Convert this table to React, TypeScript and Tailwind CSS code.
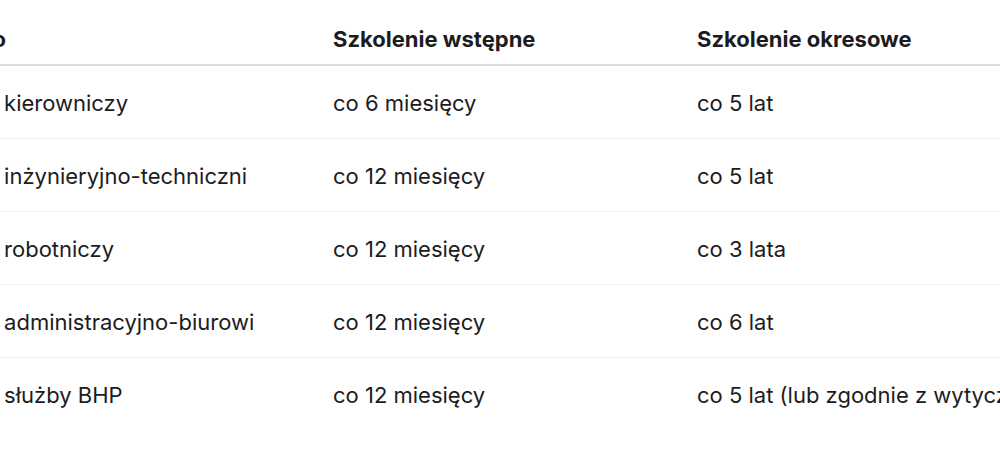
const rows = [
  { group: 'Pracownicy kierowniczy', initial: 'co 6 miesięcy', periodic: 'co 5 lat' },
  { group: 'Pracownicy inżynieryjno-techniczni', initial: 'co 12 miesięcy', periodic: 'co 5 lat' },
  { group: 'Pracownicy robotniczy', initial: 'co 12 miesięcy', periodic: 'co 3 lata' },
  { group: 'Pracownicy administracyjno-biurowi', initial: 'co 12 miesięcy', periodic: 'co 6 lat' },
  { group: 'Pracownicy służby BHP', initial: 'co 12 miesięcy', periodic: 'co 5 lat (lub zgodnie z wytycznymi)' },
];

export default function App() {
  return (
    <div
      className="w-[1000px] h-[469px] overflow-hidden bg-white text-[#1c1c1e]"
      style={{ fontFamily: 'Inter, "Noto Sans", sans-serif' }}
    >
      <table className="ml-[-123px] w-[1320px] table-fixed border-collapse text-left text-[22px] whitespace-nowrap">
        <colgroup>
          <col className="w-[456px]" />
          <col className="w-[364px]" />
          <col className="w-[500px]" />
        </colgroup>
        <thead>
          <tr className="h-[65px] border-b-2 border-[#dcdcdc]">
            <th className="p-0 pt-[15px] pl-[4px] font-bold">Stanowisko</th>
            <th className="p-0 pt-[15px] font-bold">Szkolenie wstępne</th>
            <th className="p-0 pt-[15px] font-bold">Szkolenie okresowe</th>
          </tr>
        </thead>
        <tbody>
          {rows.map((r, i) => (
            <tr
              key={r.group}
              className={i < rows.length - 1 ? 'h-[73px] border-b border-[#efefef]' : 'h-[73px]'}
            >
              <td className="p-0 pt-[4px]">{r.group}</td>
              <td className="p-0 pt-[4px]">{r.initial}</td>
              <td className="p-0 pt-[4px]">{r.periodic}</td>
            </tr>
          ))}
        </tbody>
      </table>
    </div>
  );
}
